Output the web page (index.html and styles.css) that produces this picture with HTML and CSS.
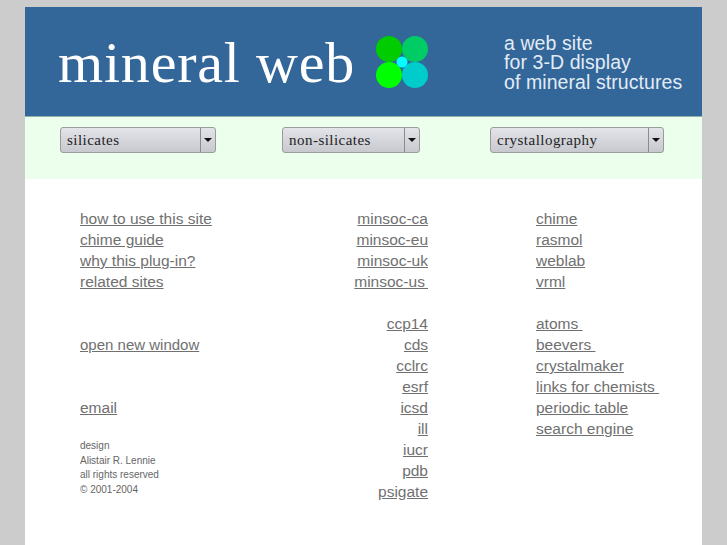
FILE: index.html
```html
<!DOCTYPE html>
<html lang="en">
<head>
  <meta charset="UTF-8" />
  <title>mineral web</title>
  <link rel="stylesheet" href="styles.css">
</head>
<body>

<div class="page">
  <div class="banner">
    <div class="logo-text">mineral web</div>
    <svg class="logo" width="54" height="54" viewBox="0 0 54 54">
      <circle cx="14" cy="14" r="13" fill="#00cc00"/>
      <circle cx="40" cy="14" r="13" fill="#00cc66"/>
      <circle cx="14" cy="40" r="13" fill="#00ff00"/>
      <circle cx="40" cy="40" r="13" fill="#00cccc"/>
      <circle cx="27" cy="27" r="5.5" fill="#00ffff"/>
    </svg>
    <div class="tagline">a web site<br>for 3-D display<br>of mineral structures</div>
  </div>

  <div class="menus">
    <div class="menu menu-a"><span class="menu-label">silicates</span><span class="menu-btn"><i></i></span></div>
    <div class="menu menu-b"><span class="menu-label">non-silicates</span><span class="menu-btn"><i></i></span></div>
    <div class="menu menu-c"><span class="menu-label">crystallography</span><span class="menu-btn"><i></i></span></div>
  </div>

  <div class="content">
    <div class="col col-left">
      <a href="#">how to use this site</a>
      <a href="#">chime guide</a>
      <a href="#">why this plug-in?</a>
      <a href="#">related sites</a>
      <span class="blank"></span>
      <span class="blank"></span>
      <a href="#" class="tight">open new window</a>
      <span class="blank"></span>
      <span class="blank"></span>
      <a href="#">email</a>
      <div class="credit">design<br>Alistair R. Lennie<br>all rights reserved<br>© 2001-2004</div>
    </div>
    <div class="col col-mid">
      <a href="#">minsoc-ca</a>
      <a href="#">minsoc-eu</a>
      <a href="#">minsoc-uk</a>
      <a href="#">minsoc-us&#8201;</a>
      <span class="blank"></span>
      <a href="#">ccp14</a>
      <a href="#">cds</a>
      <a href="#">cclrc</a>
      <a href="#">esrf</a>
      <a href="#">icsd</a>
      <a href="#">ill</a>
      <a href="#">iucr</a>
      <a href="#">pdb</a>
      <a href="#">psigate</a>
    </div>
    <div class="col col-right">
      <a href="#">chime</a>
      <a href="#">rasmol</a>
      <a href="#">weblab</a>
      <a href="#">vrml</a>
      <span class="blank"></span>
      <a href="#">atoms&nbsp;</a>
      <a href="#">beevers&nbsp;</a>
      <a href="#">crystalmaker</a>
      <a href="#">links for chemists&nbsp;</a>
      <a href="#">periodic table</a>
      <a href="#">search engine</a>
    </div>
  </div>
</div>

</body>
</html>
```

FILE: styles.css
```css
html, body {
  height: 100%;
}

body {
  margin: 0;
  background: #cccccc;
  font-family: "Liberation Sans", Arial, sans-serif;
  overflow: hidden;
}

.page {
  width: 677px;
  margin: 7px 0 0 25px;
  background: #fff;
  height: 538px;
}

.banner {
  height: 109px;
  background: #336699;
  border-bottom: 1px solid #8fb0a8;
  display: flex;
  align-items: center;
  color: #fff;
}

.logo-text {
  font-family: "Liberation Serif", "Times New Roman", serif;
  font-size: 58px;
  letter-spacing: 0.8px;
  margin-left: 33px;
  margin-top: 2px;
  width: 317px;
  white-space: nowrap;
  line-height: 66px;
}

.logo {
  display: block;
  flex-shrink: 0;
}

.tagline {
  margin-left: 75px;
  font-size: 19.5px;
  line-height: 19.5px;
  letter-spacing: 0.08px;
  color: #e2ecf6;
  margin-top: 3px;
  white-space: nowrap;
}

.menus {
  height: 62px;
  background: #ecffec;
  display: flex;
  padding: 10px 0 0 35px;
  box-sizing: border-box;
}

.menu {
  height: 26px;
  box-sizing: border-box;
  border: 1px solid #9a9c9a;
  border-radius: 3px;
  background: linear-gradient(#e3e3ea, #c8c8cf);
  display: flex;
  font-family: "Liberation Serif", "Times New Roman", serif;
  font-size: 15px;
  letter-spacing: 0.47px;
  color: #222;
}

.menu-a { width: 156px; }
.menu-b { width: 138px; margin-left: 66px; }
.menu-c { width: 174px; margin-left: 70px; }

.menu-label {
  flex: 1;
  padding-left: 6px;
  line-height: 25px;
}

.menu-btn {
  width: 14px;
  border-left: 1px solid #8a8c8a;
  display: flex;
  align-items: center;
  justify-content: center;
}

.menu-btn i {
  display: block;
  width: 0;
  height: 0;
  border-left: 4px solid transparent;
  border-right: 4px solid transparent;
  border-top: 4px solid #111;
}

.content {
  display: flex;
  padding-top: 29px;
  font-size: 15.5px;
  line-height: 21px;
}

.col a {
  display: block;
  width: fit-content;
  color: #707070;
  white-space: nowrap;
}

.col a.tight {
  font-size: 15px;
}

.blank {
  display: block;
  height: 21px;
}

.col-left {
  width: 223px;
  margin-left: 55px;
}

.col-mid {
  width: 125px;
  text-align: right;
}

.col-mid a {
  margin-left: auto;
}

.col-right {
  margin-left: 108px;
}

.credit {
  margin-top: 21px;
  font-size: 10px;
  line-height: 14.5px;
  color: #666;
}
```
